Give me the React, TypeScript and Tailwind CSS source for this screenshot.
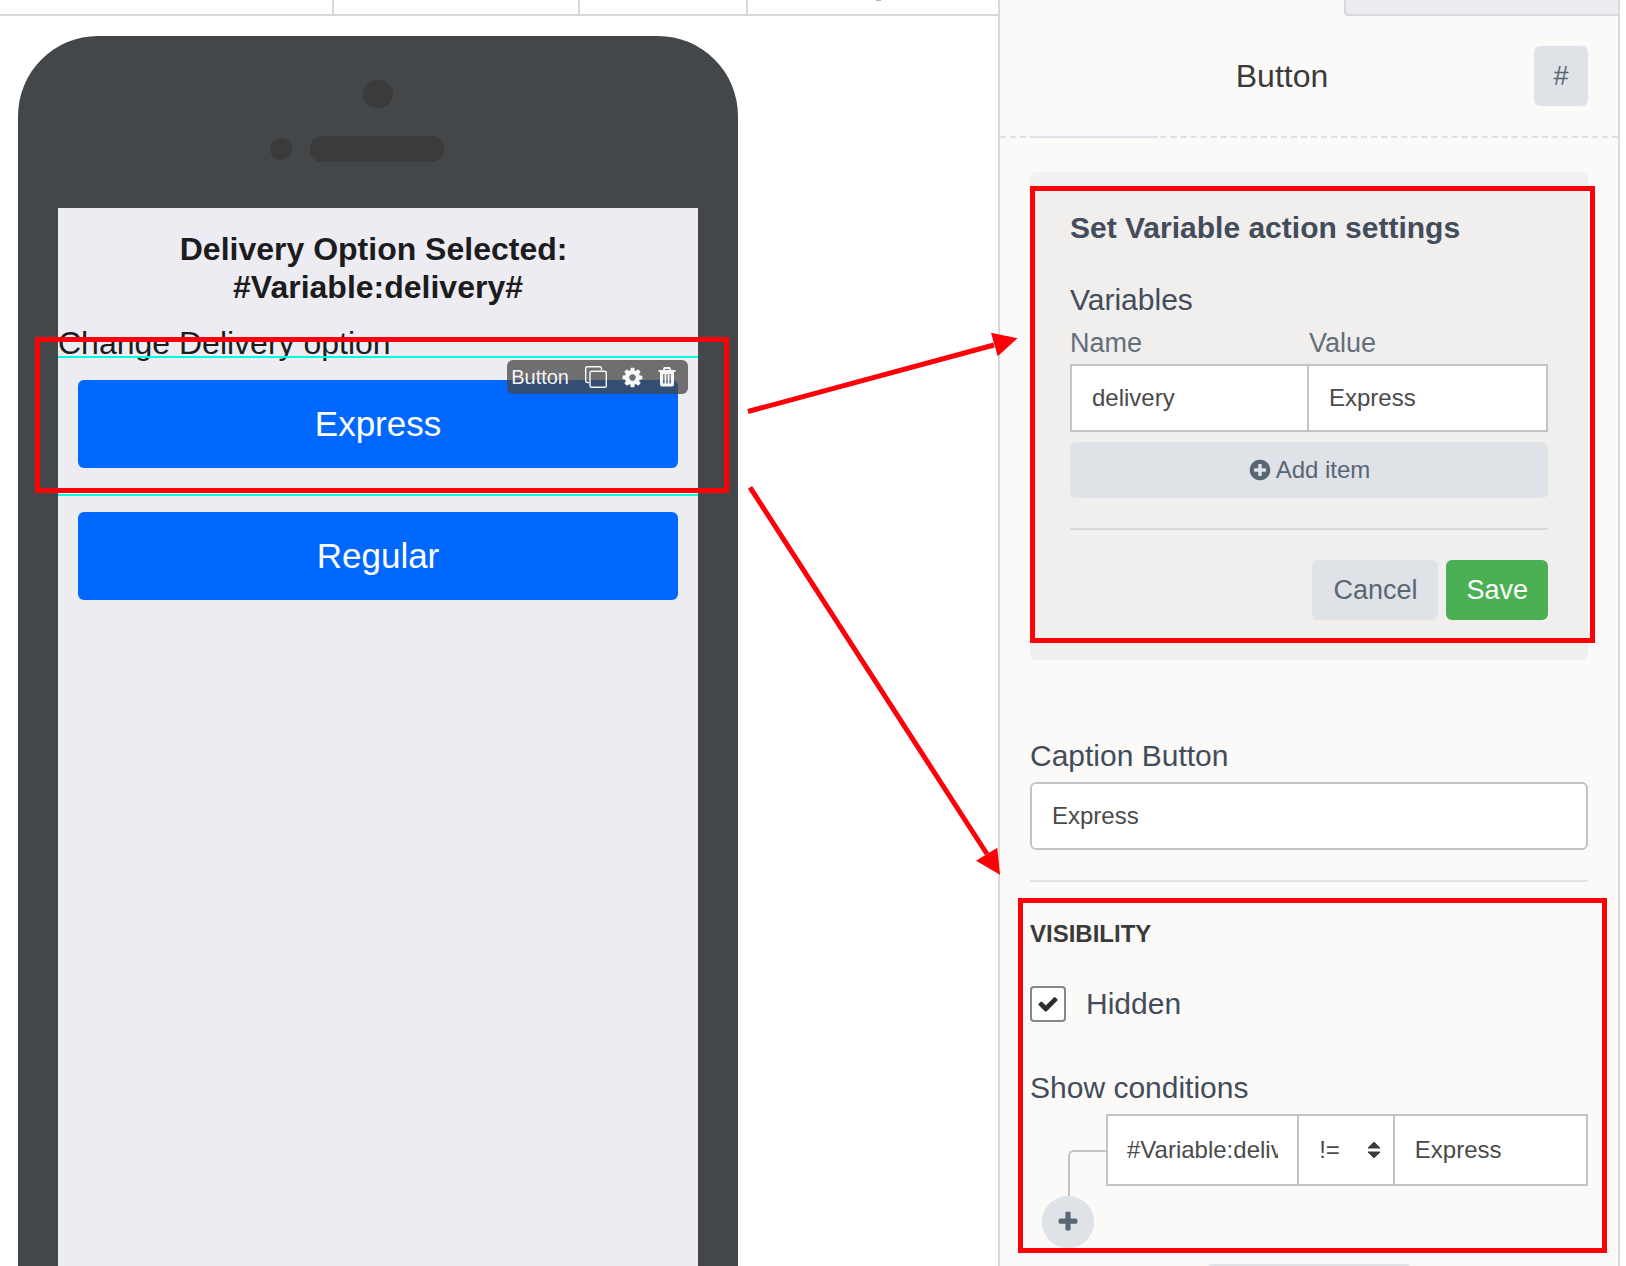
import { useState } from "react";

const primaryButton = "h-[88px] w-full rounded-md bg-[#0068ff] text-[35px] font-medium text-white";
const fieldText = "min-w-0 bg-white text-2xl text-[#4a4a4a] outline-none";
const labelText = "block text-[30px] leading-9 text-[#424c5a]";

const icons = {
  check:
    "M1671 566q0 40-28 68l-724 724-136 136q-28 28-68 28t-68-28l-136-136-362-362q-28-28-28-68t28-68l136-136q28-28 68-28t68 28l294 295 656-657q28-28 68-28t68 28l136 136q28 28 28 68z",
  plus: "M1600 736v192q0 40-28 68t-68 28h-416v416q0 40-28 68t-68 28h-192q-40 0-68-28t-28-68v-416h-416q-40 0-68-28t-28-68v-192q0-40 28-68t68-28h416v-416q0-40 28-68t68-28h192q40 0 68 28t28 68v416h416q40 0 68 28t28 68z",
  plusCircle:
    "M1344 960v-128q0-26-19-45t-45-19h-256v-256q0-26-19-45t-45-19h-128q-26 0-45 19t-19 45v256h-256q-26 0-45 19t-19 45v128q0 26 19 45t45 19h256v256q0 26 19 45t45 19h128q26 0 45-19t19-45v-256h256q26 0 45-19t19-45zm320-64q0 209-103 385.500t-279.500 279.500-385.500 103-385.500-103-279.500-279.500-103-385.500 103-385.500 279.500-279.500 385.500-103 385.500 103 279.500 279.500 103 385.500z",
  cog: "M1152 896q0-106-75-181t-181-75-181 75-75 181 75 181 181 75 181-75 75-181zm512-109v222q0 12-8 23t-20 13l-185 28q-19 54-39 91 35 50 107 138 10 12 10 25t-9 23q-27 37-99 108t-94 71q-12 0-26-9l-138-108q-44 23-91 38-16 136-29 186-7 28-36 28h-222q-14 0-24.500-8.500t-11.500-21.500l-28-184q-49-16-90-37l-141 107q-10 9-25 9-14 0-25-11-126-114-165-168-7-10-7-23 0-12 8-23 15-21 51-66.500t54-70.500q-27-50-41-99l-183-27q-13-2-21-12.500t-8-23.500v-222q0-12 8-23t19-13l186-28q14-46 39-92-40-57-107-138-10-12-10-24 0-10 9-23 26-36 98.500-107.500t94.500-71.500q13 0 26 10l138 107q44-23 91-38 16-136 29-186 7-28 36-28h222q14 0 24.500 8.500t11.500 21.500l28 184q49 16 90 37l142-107q9-9 24-9 13 0 25 10 129 119 165 170 7 8 7 22 0 12-8 23-15 21-51 66.500t-54 70.500q26 50 41 98l183 28q13 2 21 12.500t8 23.500z",
};

function Icon({ name, size, className }: { name: keyof typeof icons; size: number; className?: string }) {
  return (
    <svg width={size} height={size} viewBox="0 0 1792 1792" fill="currentColor" className={className}>
      <path d={icons[name]} />
    </svg>
  );
}

function Marker({ className }: { className: string }) {
  return <div className={`pointer-events-none absolute z-10 border-[5px] border-[#ff0009] ${className}`} />;
}

function Phone() {
  return (
    <div className="mt-5 ml-[18px] flex w-[720px] flex-1 flex-col rounded-t-[80px] bg-[#444749] px-10">
      <div className="flex h-[172px] shrink-0 flex-col items-center pt-11">
        <div className="h-7 w-[30px] rounded-full bg-[#3c3b3b]" />
        <div className="mt-7 mr-[42px] flex items-center gap-[18px]">
          <div className="h-[22px] w-[22px] rounded-full bg-[#3c3b3b]" />
          <div className="h-[26px] w-[134px] rounded-xl bg-[#3c3b3b]" />
        </div>
      </div>

      <div className="flex-1 bg-[#edecf2] pt-[22px] text-[#1c1c1e]">
        <h2 className="text-center text-[32px] leading-[38px] font-bold">
          Delivery Option Selected:&nbsp;
          <br />
          #Variable:delivery#
        </h2>
        <p className="mt-6 text-[32px] leading-[26px]">Change Delivery option</p>

        <div className="relative border-y-2 border-[#00ffdd] px-5 pt-[22px] pb-[26px]">
          <button className={primaryButton}>Express</button>
          <div className="absolute top-[2px] right-[10px] flex h-[34px] items-center rounded-md bg-[#444444]/75 pr-3 pl-1 text-xl text-white/95">
            <span>Button</span>
            <button aria-label="Duplicate" className="ml-4">
              <svg width="22" height="22" viewBox="0 0 22 22" fill="none" stroke="currentColor" strokeWidth="1.4">
                <path d="M4 16.500H2A1.500 1.500 0 0 1 .7 15V2A1.300 1.300 0 0 1 2 .7h13A1.500 1.500 0 0 1 16.500 2v2" />
                <rect x="5" y="5.300" width="16.300" height="16" rx="1.500" />
              </svg>
            </button>
            <button aria-label="Settings" className="ml-[14px]">
              <Icon name="cog" size={23} />
            </button>
            <button aria-label="Delete" className="ml-[14px]">
              <svg width="18" height="20" viewBox="0 0 18 20" fill="none" stroke="currentColor">
                <path d="M.5 4h17M5.500 3.500 6.500 1h5l1 2.500" strokeWidth="1.8" />
                <path d="M2 5h14v12.500a2 2 0 0 1-2 2H4a2 2 0 0 1-2-2zM5.200 7v9.500h1.300V7zM8.350 7v9.500h1.300V7zM11.500 7v9.500h1.300V7z" fill="currentColor" fillRule="evenodd" stroke="none" />
              </svg>
            </button>
          </div>
          <Marker className="-top-[21px] -right-[31px] bottom-[1px] -left-[23px]" />
        </div>

        <div className="mt-4 px-5">
          <button className={primaryButton}>Regular</button>
        </div>
      </div>
    </div>
  );
}

function ActionSettings() {
  const [name, setName] = useState("delivery");
  const [value, setValue] = useState("Express");

  return (
    <section className="relative mt-[34px] rounded-md bg-linear-to-b from-[#f3f2f0] to-[#f0efed] to-5% px-10 pt-[38px] pb-10">
      <h3 className="text-[30px] leading-9 font-bold text-[#424c5a]">Set Variable action settings</h3>
      <div className="mt-9 text-[30px] leading-9 text-[#424c5a]">Variables</div>
      <div className="mt-2 grid grid-cols-2 text-[27px] leading-[34px] text-[#636e7b]">
        <label htmlFor="var-name">Name</label>
        <label htmlFor="var-value">Value</label>
      </div>
      <div className="mt-1 grid h-[68px] grid-cols-2 border-2 border-[#c3c3c3]">
        <input id="var-name" value={name} onChange={(e) => setName(e.target.value)} className={`${fieldText} border-r-2 border-[#c3c3c3] px-5`} />
        <input id="var-value" value={value} onChange={(e) => setValue(e.target.value)} className={`${fieldText} px-5`} />
      </div>
      <button className="mt-[10px] flex h-14 w-full items-center justify-center gap-1 rounded-md bg-[#dfe2e7] text-2xl text-[#596674]">
        <Icon name="plusCircle" size={24} />
        Add item
      </button>
      <hr className="mt-[30px] border-t-2 border-[#d9d8d7]" />
      <div className="mt-[30px] flex justify-end gap-2 text-[27px]">
        <button className="h-[60px] rounded-md bg-[#dfe2e7] px-[21px] text-[#596674]">Cancel</button>
        <button className="h-[60px] rounded-md bg-[#4bb053] px-5 text-white">Save</button>
      </div>
      <Marker className="top-[14px] -right-[7px] bottom-[17px] left-0" />
    </section>
  );
}

function Visibility() {
  const [hidden, setHidden] = useState(true);
  const [variable, setVariable] = useState("#Variable:delivery#");
  const [operator, setOperator] = useState("!=");
  const [value, setValue] = useState("Express");

  return (
    <section className="relative pt-[38px]">
      <h3 className="text-2xl leading-7 font-bold text-[#3a3a3a]">VISIBILITY</h3>
      <label className="mt-[38px] flex items-center gap-5 text-[30px] leading-9 text-[#424c5a]">
        <span className="relative flex h-9 w-9">
          <input type="checkbox" checked={hidden} onChange={(e) => setHidden(e.target.checked)} className="h-9 w-9 appearance-none rounded border-2 border-[#868686] bg-white" />
          {hidden && <Icon name="check" size={22} className="pointer-events-none absolute inset-0 m-auto text-[#2d2d2d]" />}
        </span>
        Hidden
      </label>

      <div className="mt-12 text-[30px] leading-9 text-[#424c5a]">Show conditions</div>
      <div className="mt-2 flex h-[72px]">
        <div className="mt-9 -mb-[10px] ml-[38px] w-[38px] rounded-tl-md border-t-2 border-l-2 border-[#c3c3c3]" />
        <div className="grid flex-1 grid-cols-[2fr_1fr_2fr] border-2 border-[#c3c3c3]">
          <input aria-label="Variable" value={variable} onChange={(e) => setVariable(e.target.value)} className={`${fieldText} border-r-2 border-[#c3c3c3] px-[19px]`} />
          <div className="relative flex border-r-2 border-[#c3c3c3]">
            <select aria-label="Operator" value={operator} onChange={(e) => setOperator(e.target.value)} className={`${fieldText} w-full appearance-none px-5`}>
              <option>!=</option>
              <option>==</option>
            </select>
            <svg width="14" height="18" viewBox="0 0 14 18" className="pointer-events-none absolute inset-y-0 right-3 my-auto fill-[#3a3a3a] stroke-[#3a3a3a]" strokeLinejoin="round">
              <path d="M7 1.200 13 7H1zM7 16.800 1 11h12z" />
            </svg>
          </div>
          <input aria-label="Compared value" value={value} onChange={(e) => setValue(e.target.value)} className={`${fieldText} px-5`} />
        </div>
      </div>
      <button aria-label="Add condition" className="mt-[10px] ml-3 flex h-[52px] w-[52px] items-center justify-center rounded-full bg-[#dfe2e7] text-[#596674]">
        <Icon name="plus" size={24} />
      </button>
      <Marker className="top-4 -right-[19px] -bottom-[5px] -left-3" />
    </section>
  );
}

function Arrows() {
  return (
    <svg className="pointer-events-none absolute top-0 left-0 z-10" width="1040" height="900" viewBox="0 0 1040 900" fill="#ff0009">
      <path d="M748 411.500 994 345" stroke="#ff0009" strokeWidth="5" />
      <path d="M991 332.700 1017.500 338.300 997.700 356.300z" />
      <path d="M750 487.300 987 854" stroke="#ff0009" strokeWidth="5" />
      <path d="M997.300 847.700 1000 874.700 976 860.700z" />
    </svg>
  );
}

export default function App() {
  const [caption, setCaption] = useState("Express");

  return (
    <div className="relative flex h-screen overflow-hidden bg-white font-['Liberation_Sans',Arial,sans-serif]">
      <main className="flex min-w-0 flex-1 flex-col">
        <div className="flex h-4 shrink-0 border-b-2 border-[#d9d9d9]">
          <div className="w-[334px] border-r-2 border-[#d9d9d9]" />
          <div className="w-[246px] border-r-2 border-[#d9d9d9]" />
          <div className="w-[168px] border-r-2 border-[#d9d9d9]" />
          <div className="ml-32 h-px w-[5px] bg-[#b5b5b5]" />
        </div>
        <Phone />
      </main>

      <aside className="mr-[6px] w-[622px] shrink-0 border-x-2 border-[#d9d9d9] bg-[#fbfaf9]">
        <div className="flex h-4 justify-end">
          <div className="w-[274px] rounded-bl border-b-2 border-l-2 border-[#d9d9d9] bg-[#edebf0]" />
        </div>
        <header className="flex items-center px-[30px] py-[30px]">
          <h1 className="flex-1 text-center text-[32px] leading-9 text-[#3a3a3a]">Button</h1>
          <button className="h-[60px] w-[54px] rounded-md bg-[#dfe2e7] text-[27px] text-[#596674]">#</button>
        </header>
        <div className="border-t-2 border-dashed border-[#e0e0e0]">
          <div className="-mt-[2px] ml-[30px] h-[2px] w-32 bg-[#dfe3e8]" />
        </div>

        <div className="px-[30px]">
          <ActionSettings />
          <label htmlFor="caption" className={`${labelText} mt-[78px]`}>
            Caption Button
          </label>
          <input id="caption" value={caption} onChange={(e) => setCaption(e.target.value)} className={`${fieldText} mt-2 h-[68px] w-full rounded-md border-2 border-[#c3c3c3] px-5`} />
          <hr className="mt-[30px] border-t-2 border-[#e2e2e1]" />
          <Visibility />
          <div className="mx-auto mt-4 h-[60px] w-[206px] rounded-md bg-[#dfe2e7]" />
        </div>
      </aside>

      <Arrows />
    </div>
  );
}
